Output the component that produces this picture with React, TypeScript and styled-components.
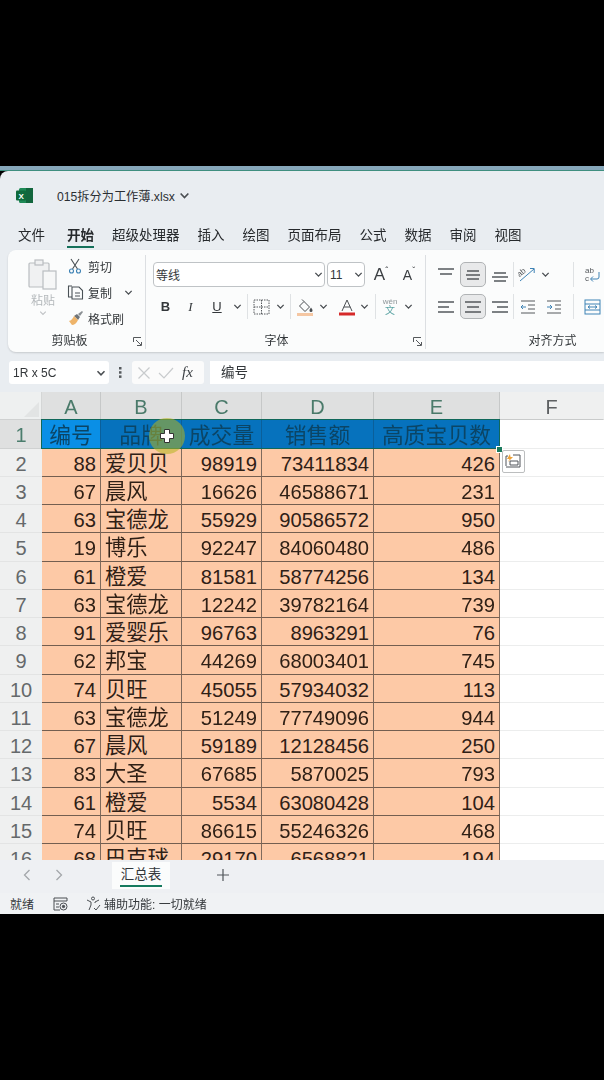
import React from "react";
import styled, { createGlobalStyle } from "styled-components";

const Global = createGlobalStyle`
  html, body { margin: 0; padding: 0; background: #000; }
  body { font-family: "Liberation Sans", "Noto Sans CJK SC", sans-serif; }
`;

const Page = styled.div`
  width: 604px; height: 1080px; background: #000; overflow: hidden;
  display: flex; flex-direction: column;
`;
const BlackBand = styled.div<{ $h: number }>`height: ${(p) => p.$h}px; flex: none; background: #000;`;
const DesktopStrip = styled.div`
  height: 4px; flex: none; background: #86a7ba; border-bottom: 1px solid #3f8f80; box-sizing: content-box;
`;
const Window = styled.div`
  height: 743px; flex: none; background: #e9edf1; display: flex; flex-direction: column;
  border-top-left-radius: 8px; overflow: hidden; filter: blur(0.35px);
`;
const TitleBar = styled.div`
  height: 51px; flex: none; display: flex; align-items: center; padding: 0 0 2px 16px; box-sizing: border-box;
  color: #2b2f33; font-size: 12.2px;
`;
const TitleText = styled.span`margin-left: 24px; margin-right: 4px;`;
const TabRow = styled.div`
  height: 28px; flex: none; display: flex; align-items: flex-start; padding: 5px 0 0 18px; box-sizing: border-box; gap: 18px;
`;
const Tab = styled.div<{ $active?: boolean }>`
  font-size: 13.5px; line-height: 17px; height: 21px; color: #26292c; white-space: nowrap; box-sizing: border-box;
  font-weight: ${(p) => (p.$active ? 700 : 400)};
  margin-left: ${(p) => (p.$active ? 4 : 0)}px;
  border-bottom: ${(p) => (p.$active ? "2px solid #14705a" : "none")};
`;
const Ribbon = styled.div`
  height: 102px; flex: none; margin-left: 8px; background: #fbfcfc; border-radius: 8px 0 0 8px;
  display: flex; box-shadow: 0 1px 2px rgba(0,0,0,.15); overflow: hidden;
`;
const Group = styled.div<{ $w: number }>`
  width: ${(p) => p.$w}px; flex: none; position: relative; display: flex; flex-direction: column;
  border-right: 1px solid #dcdfe2; box-sizing: border-box; margin: 5px 0 3px;
`;
const GroupBody = styled.div`flex: 1; min-height: 0; display: flex; flex-direction: column; gap: 7px; padding-top: 7px;`;
const GroupLabel = styled.div<{ $pr: number }>`
  height: 18px; flex: none; text-align: center; font-size: 12px; line-height: 20px; color: #33373a; padding-right: ${(p) => p.$pr}px;
`;
const Launcher = styled.span`position: absolute; right: 3px; bottom: 3px; display: flex;`;
const ClipBody = styled.div`flex: 1; display: flex; padding: 1px 0 0 18px;`;
const PasteCol = styled.div`
  width: 34px; padding-top: 3px; display: flex; flex-direction: column; align-items: center; color: #b4b8bb; font-size: 12px;
`;
const PasteLabel = styled.span`margin-top: 2px; line-height: 16px;`;
const ClipList = styled.div`margin-left: 5px; display: flex; flex-direction: column; gap: 6px;`;
const ClipItem = styled.div`
  display: flex; align-items: center; gap: 3px; height: 20px; font-size: 12px; color: #33373a; white-space: nowrap;
`;
const IconSlot = styled.span<{ $w?: number; $ml?: number }>`
  width: ${(p) => p.$w ?? 20}px; margin-left: ${(p) => p.$ml ?? 0}px; flex: none; display: flex; align-items: center; justify-content: center;
`;
const Row = styled.div`display: flex; align-items: center; height: 25px; padding-left: 7px;`;
const SelectBox = styled.div<{ $w: number }>`
  width: ${(p) => p.$w}px; height: 25px; flex: none; box-sizing: border-box; background: #fff; border: 1px solid #bfc3c6; border-radius: 4px;
  display: flex; align-items: center; justify-content: space-between; padding: 0 1px 0 2px; font-size: 12px; color: #33373a; margin-right: 2px;
`;
const Btn = styled.span<{ $w: number; $on?: boolean; $ml?: number }>`
  width: ${(p) => p.$w}px; height: 25px; flex: none; box-sizing: border-box; display: flex; align-items: center; justify-content: center;
  margin-left: ${(p) => p.$ml ?? 0}px; border-radius: 5px; font-size: 13px; color: #33373a;
  background: ${(p) => (p.$on ? "#e8e9ea" : "transparent")};
  border: 1px solid ${(p) => (p.$on ? "#b0b3b5" : "transparent")};
`;
const Bold = styled.b`font-size: 13px;`;
const Italic = styled.i`font-size: 13px; font-family: "Liberation Serif", serif;`;
const Under = styled.u`font-size: 13px;`;
const Sep = styled.span`width: 1px; height: 25px; flex: none; background: #dfe2e4;`;
const BigA = styled.span<{ $s: number }>`font-size: ${(p) => p.$s}px; color: #3a3e42; display: flex; align-items: flex-start; line-height: 18px;`;
const Caret = styled.span`font-size: 9px; line-height: 9px;`;
const Wen = styled.span`display: flex; flex-direction: column; align-items: center; font-size: 8px; line-height: 8px; color: #8d9598;`;
const WenCjk = styled.span`font-size: 10px; line-height: 9px; color: #5aa3a3;`;

const FormulaRow = styled.div`
  height: 23px; flex: none; margin-top: 9px; display: flex; align-items: stretch;
`;
const NameBox = styled.div`
  width: 100px; margin-left: 9px; background: #fff; border-radius: 3px; display: flex; align-items: center; justify-content: space-between;
  box-sizing: border-box; padding: 0 3px 0 4px; font-size: 12px; color: #33373a;
`;
const Dots = styled.div`width: 23px; flex: none; display: flex; align-items: center; justify-content: center;`;
const FxBox = styled.div`
  width: 72px; background: #fbfbfb; border-radius: 3px; display: flex; align-items: center; gap: 7px; box-sizing: border-box; padding-left: 5px;
`;
const FxLabel = styled.i`font-family: "Liberation Serif", serif; font-size: 15px; color: #3a3e42; margin-left: 1px;`;
const FormulaInput = styled.div`
  flex: 1; margin-left: 6px; background: #fff; font-size: 13.5px; color: #33373a; display: flex; align-items: center; padding: 0 0 3px 11px;
`;

const Sheet = styled.div`
  height: 468px; flex: none; margin-top: 8px; position: relative; overflow: hidden; background: #fff;
  display: grid; grid-template-columns: 42px 59px 81px 80px 112px 126px 1fr; grid-auto-rows: 28.25px; align-content: start;
`;
const Corner = styled.div`
  height: 28px; background: #eef0f0; border-right: 1px solid #d4d6d6; border-bottom: 1px solid #cfd1d1; box-sizing: border-box; position: relative;
  &::after { content: ""; position: absolute; right: 2px; bottom: 2px; border-style: solid; border-width: 0 0 15px 15px; border-color: transparent transparent #e2e4e4 transparent; }
`;
const ColHead = styled.div<{ $sel?: boolean }>`
  height: 28px; box-sizing: border-box; text-align: center; font-size: 20px; line-height: 30px;
  background: ${(p) => (p.$sel ? "#dfe0e0" : "#eff0f0")};
  color: ${(p) => (p.$sel ? "#4a7a6a" : "#5d6062")};
  border-right: 1px solid ${(p) => (p.$sel ? "#c6c8c8" : "#eff0f0")};
  border-bottom: 1px solid ${(p) => (p.$sel ? "#2f7d68" : "#c9cbcb")};
`;
const RowHead = styled.div<{ $sel?: boolean }>`
  box-sizing: border-box; text-align: center; font-size: 20px; line-height: 30px; color: ${(p) => (p.$sel ? "#4b7d6d" : "#65696b")};
  background: ${(p) => (p.$sel ? "#dfe0e0" : "#eff0f0")}; border-bottom: 1px solid ${(p) => (p.$sel ? "#cfd1d1" : "#e3e4e4")};
`;
const Cell = styled.div<{ $name?: boolean }>`
  box-sizing: border-box; background: #fdc9a6; color: #2f2016; line-height: 30px; white-space: nowrap; overflow: hidden;
  border-right: 1px solid #7f6a5c; border-bottom: 1px solid #735e50;
  font-size: ${(p) => (p.$name ? 21.2 : 20.2)}px;
  text-align: ${(p) => (p.$name ? "left" : "right")};
  padding: ${(p) => (p.$name ? "0 0 0 4px" : "0 4px 0 0")};
`;
const HeadCell = styled.div<{ $active?: boolean }>`
  box-sizing: border-box; background: ${(p) => (p.$active ? "#0a8fe6" : "#0672bd")}; color: #0b4566; font-size: 21.8px; line-height: 31px;
  text-align: center; white-space: nowrap; overflow: hidden; border-right: 1px solid #0a5f9a;
`;
const Blank = styled.div`border-bottom: 1px solid #eceded; box-sizing: border-box;`;
const Selection = styled.div`
  position: absolute; left: 41px; top: 27px; width: 459px; height: 30px; box-sizing: border-box; border: 1.5px solid #10685a; pointer-events: none;
`;
const Handle = styled.div`position: absolute; left: 496px; top: 54px; width: 5px; height: 5px; background: #1a7a5c; border: 1px solid #fff;`;
const Glow = styled.div`
  position: absolute; left: 149px; top: 26px; width: 36px; height: 36px; border-radius: 50%; background: rgba(180, 180, 30, .55);
`;
const CursorWrap = styled.div`position: absolute; left: 159px; top: 36px; display: flex;`;
const PasteOpt = styled.div`
  position: absolute; left: 502px; top: 58px; width: 23px; height: 23px; background: #fff; border: 1px solid #bcbebf; box-sizing: border-box; border-radius: 2px;
  display: flex; align-items: center; justify-content: center;
`;

const SheetBar = styled.div`
  height: 33px; flex: none; background: #eef0f3; display: flex; align-items: flex-start; padding-top: 2px; box-sizing: border-box;
`;
const NavBtn = styled.span<{ $w: number }>`width: ${(p) => p.$w}px; height: 26px; flex: none; display: flex; align-items: center; justify-content: center;`;
const SheetTab = styled.div`
  width: 58px; height: 27px; background: #fbfcfc; flex: none; margin-left: 27px; position: relative; box-sizing: border-box;
  text-align: center; font-size: 13.5px; line-height: 25px; color: #33373a;
  &::after { content: ""; position: absolute; left: 8px; right: 8px; bottom: 2px; height: 2px; background: #167a5e; }
`;
const StatusBar = styled.div`
  height: 21px; flex: none; background: #f0f2f4; display: flex; align-items: center; padding-left: 10px; font-size: 12px; color: #33373a; box-sizing: border-box;
`;
const StatusGap = styled.span<{ $w: number }>`width: ${(p) => p.$w}px; flex: none; display: flex; align-items: center;`;

const Chev = ({ s = 9, c = "#4a4e52" }: { s?: number; c?: string }) => (
  <svg width={s} height={s} viewBox="0 0 10 10" fill="none" stroke={c} strokeWidth="1.5"><path d="M1.5 3.2 5 6.8 8.5 3.2" /></svg>
);
const Lines = ({ d, c = "#54585c" }: { d: string; c?: string }) => (
  <svg width="18" height="16" viewBox="0 0 18 16" fill="none" stroke={c} strokeWidth="1.3"><path d={d} /></svg>
);
const LaunchIcon = () => (
  <svg width="9" height="9" viewBox="0 0 9 9" fill="none" stroke="#55595c"><path d="M.5 5V.5H8M8.5 8.5H4M3 3l5 5M8.5 5v3.5" /></svg>
);

const tabs = ["文件", "开始", "超级处理器", "插入", "绘图", "页面布局", "公式", "数据", "审阅", "视图"];
const cols = ["A", "B", "C", "D", "E"];
const header = ["编号", "品牌", "成交量", "销售额", "高质宝贝数"];
const rows: [number, string, number, number, number][] = [
  [88, "爱贝贝", 98919, 73411834, 426],
  [67, "晨风", 16626, 46588671, 231],
  [63, "宝德龙", 55929, 90586572, 950],
  [19, "博乐", 92247, 84060480, 486],
  [61, "橙爱", 81581, 58774256, 134],
  [63, "宝德龙", 12242, 39782164, 739],
  [91, "爱婴乐", 96763, 8963291, 76],
  [62, "邦宝", 44269, 68003401, 745],
  [74, "贝旺", 45055, 57934032, 113],
  [63, "宝德龙", 51249, 77749096, 944],
  [67, "晨风", 59189, 12128456, 250],
  [83, "大圣", 67685, 5870025, 793],
  [61, "橙爱", 5534, 63080428, 104],
  [74, "贝旺", 86615, 55246326, 468],
  [68, "巴克球", 29170, 6568821, 194],
];

export default function App() {
  return (
    <Page>
      <Global />
      <BlackBand $h={166} />
      <DesktopStrip />
      <Window>
        <TitleBar>
          <svg width="17" height="17" viewBox="0 0 17 17">
            <rect x="3" y="1" width="14" height="15" rx="1.5" fill="#1f8a57" />
            <rect x="10" y="1" width="7" height="15" fill="#12663d" />
            <rect x="0" y="3.5" width="10" height="10" rx="1" fill="#0f6b3d" />
            <text x="2.6" y="11.5" fontSize="8" fontWeight="700" fill="#fff" fontFamily="Liberation Sans">X</text>
          </svg>
          <TitleText>015拆分为工作薄.xlsx</TitleText>
          <Chev s={11} />
        </TitleBar>
        <TabRow>
          {tabs.map((t) => <Tab key={t} $active={t === "开始"}>{t}</Tab>)}
        </TabRow>
        <Ribbon>
          <Group $w={138}>
            <ClipBody>
              <PasteCol>
                <svg width="30" height="32" viewBox="0 0 30 32" fill="none" stroke="#b9bdc0" strokeWidth="1.2">
                  <rect x="1" y="4" width="20" height="24" rx="1" fill="#f0f1f2" />
                  <rect x="7" y="1" width="8" height="5" fill="#f0f1f2" />
                  <rect x="15" y="12" width="13" height="18" fill="#f6f7f7" />
                </svg>
                <PasteLabel>粘贴</PasteLabel>
                <Chev s={8} c="#c0c3c6" />
              </PasteCol>
              <ClipList>
                <ClipItem>
                  <IconSlot>
                    <svg width="14" height="16" viewBox="0 0 14 16" fill="none" stroke="#4a5156" strokeWidth="1.1">
                      <path d="M3 1l6.5 10M11 1 4.5 11" /><circle cx="3.5" cy="13" r="2" stroke="#3f83b5" /><circle cx="10.5" cy="13" r="2" stroke="#3f83b5" />
                    </svg>
                  </IconSlot>剪切
                </ClipItem>
                <ClipItem>
                  <IconSlot>
                    <svg width="17" height="16" viewBox="0 0 17 16" fill="none" stroke="#4a5156" strokeWidth="1.1">
                      <path d="M5 13H1.5V2H5" /><path d="M5 3h7l3.5 3.5V15H5zM8 9h5M8 12h5" />
                    </svg>
                  </IconSlot>复制<IconSlot $w={9} $ml={9}><Chev /></IconSlot>
                </ClipItem>
                <ClipItem>
                  <IconSlot>
                    <svg width="17" height="16" viewBox="0 0 17 16">
                      <path d="M7 6l3-2 3 3-2 3z" fill="#6f7478" /><path d="M11 4l4-3 1 1-3 4z" fill="#8a8f93" />
                      <path d="M2 11c2 0 4-3 5-5l4 4c-1 3-4 5-6 5z" fill="#eeb46a" />
                    </svg>
                  </IconSlot>格式刷
                </ClipItem>
              </ClipList>
            </ClipBody>
            <GroupLabel $pr={14}>剪贴板</GroupLabel>
            <Launcher><LaunchIcon /></Launcher>
          </Group>
          <Group $w={280}>
            <GroupBody>
              <Row>
                <SelectBox $w={172}>等线<Chev /></SelectBox>
                <SelectBox $w={38}>11<Chev /></SelectBox>
                <Btn $w={22} $ml={3}><BigA $s={17}>A<Caret>ˆ</Caret></BigA></Btn>
                <Btn $w={22} $ml={6}><BigA $s={14}>A<Caret>ˇ</Caret></BigA></Btn>
              </Row>
              <Row>
                <Btn $w={25}><Bold>B</Bold></Btn>
                <Btn $w={25}><Italic>I</Italic></Btn>
                <Btn $w={28}><Under>U</Under></Btn>
                <IconSlot $w={13}><Chev /></IconSlot>
                <IconSlot $w={3} />
                <Sep />
                <IconSlot $w={26}>
                  <svg width="17" height="16" viewBox="0 0 17 16" fill="none" stroke="#54585c" strokeDasharray="1.5 1"><path d="M1 1h15v14H1zM8.5 1v14M1 8h15" /></svg>
                </IconSlot>
                <IconSlot $w={9} $ml={2}><Chev /></IconSlot>
                <IconSlot $w={5} />
                <Sep />
                <IconSlot $w={28}>
                  <svg width="18" height="18" viewBox="0 0 18 18" fill="none">
                    <path d="M3.5 8 8 3.5l5.5 5.5L9 13.5zM8 3.5 6 1.5" stroke="#4a4e52" /><path d="M15 9.5c1 1.5 1.5 2 1.5 3a1.5 1.5 0 0 1-3 0c0-1 .5-1.5 1.500-3z" fill="#4a4e52" /><rect x="1" y="15" width="16" height="3" fill="#f5c7a3" />
                  </svg>
                </IconSlot>
                <IconSlot $w={9}><Chev /></IconSlot>
                <Btn $w={25} $ml={6}>
                  <svg width="18" height="18" viewBox="0 0 18 18" fill="none">
                    <path d="M4 13 9 2l5 11M5.800 9h6.400" stroke="#4a4e52" /><rect x="1" y="14.500" width="16" height="3" fill="#d62a2a" />
                  </svg>
                </Btn>
                <IconSlot $w={9} $ml={1}><Chev /></IconSlot>
                <IconSlot $w={6} />
                <Sep />
                <IconSlot $w={28}><Wen>wén<WenCjk>文</WenCjk></Wen></IconSlot>
                <IconSlot $w={9}><Chev /></IconSlot>
              </Row>
            </GroupBody>
            <GroupLabel $pr={18}>字体</GroupLabel>
            <Launcher><LaunchIcon /></Launcher>
          </Group>
          <Group $w={260}>
            <GroupBody>
              <Row>
                <Btn $w={26}><Lines d="M1 2h16M3 7h12" /></Btn>
                <Btn $w={26} $ml={1} $on><Lines d="M3 4h12M2 8h14M3 12h12" /></Btn>
                <Btn $w={27}><Lines d="M3 6h12M1 10h16M3 14h12" /></Btn>
                <Sep />
                <IconSlot $w={26}>
                  <svg width="18" height="17" viewBox="0 0 18 17" fill="none" stroke="#54585c">
                    <path d="M2 15 16 3M12 2.500h4.200V7" stroke="#3f83b5" /><text x="0" y="9" fontSize="8" fill="#54585c" stroke="none" fontFamily="Liberation Sans" transform="rotate(-40 4 8)">ab</text>
                  </svg>
                </IconSlot>
                <IconSlot $w={9} $ml={1}><Chev /></IconSlot>
                <IconSlot $w={23} />
                <Sep />
                <IconSlot $w={36}>
                  <svg width="17" height="17" viewBox="0 0 17 17" fill="none">
                    <text x="1" y="7" fontSize="8" fill="#54585c" fontFamily="Liberation Sans">ab</text>
                    <text x="1" y="15" fontSize="8" fill="#54585c" fontFamily="Liberation Sans">c</text>
                    <path d="M15 6v5a2 2 0 0 1-2 2H7M9 10.500 6.500 13 9 15.500" stroke="#3f83b5" />
                  </svg>
                </IconSlot>
              </Row>
              <Row>
                <Btn $w={26}><Lines d="M1 3h16M1 8h11M1 13h16" /></Btn>
                <Btn $w={26} $ml={1} $on><Lines d="M1 3h16M3 8h12M1 13h16" /></Btn>
                <Btn $w={27}><Lines d="M1 3h16M6 8h11M1 13h16" /></Btn>
                <Sep />
                <IconSlot $w={27}>
                  <svg width="16" height="14" viewBox="0 0 16 14" fill="none" stroke="#54585c"><path d="M1 1h14M8 5h7M8 9h7M1 13h14" /><path d="M6 7H1M3 5 1 7l2 2" stroke="#3f83b5" /></svg>
                </IconSlot>
                <IconSlot $w={26}>
                  <svg width="16" height="14" viewBox="0 0 16 14" fill="none" stroke="#54585c"><path d="M1 1h14M9 5h6M9 9h6M1 13h14" /><path d="M1 7h5M4 5l2 2-2 2" stroke="#3f83b5" /></svg>
                </IconSlot>
                <IconSlot $w={6} />
                <Sep />
                <IconSlot $w={36}>
                  <svg width="17" height="16" viewBox="0 0 17 16" fill="none" stroke="#3f83b5"><rect x="1" y="1" width="15" height="14" /><path d="M1 5h15M1 11h15M4 8h9M6 6.500 4 8l2 1.500M11 6.500 13 8l-2 1.500" /></svg>
                </IconSlot>
              </Row>
            </GroupBody>
            <GroupLabel $pr={6}>对齐方式</GroupLabel>
          </Group>
        </Ribbon>
        <FormulaRow>
          <NameBox>1R x 5C<Chev s={10} /></NameBox>
          <Dots>
            <svg width="3" height="11" viewBox="0 0 3 11" fill="#55595c"><rect width="2.5" height="2.5" /><rect y="4.200" width="2.5" height="2.5" /><rect y="8.400" width="2.5" height="2.5" /></svg>
          </Dots>
          <FxBox>
            <svg width="14" height="14" viewBox="0 0 14 14" fill="none" stroke="#c8cbcd" strokeWidth="1.2"><path d="M1.500 1.500l11 11M12.500 1.500l-11 11" /></svg>
            <svg width="16" height="14" viewBox="0 0 16 14" fill="none" stroke="#c8cbcd" strokeWidth="1.2"><path d="M1 7l5 5L15 2" /></svg>
            <FxLabel>fx</FxLabel>
          </FxBox>
          <FormulaInput>编号</FormulaInput>
        </FormulaRow>
        <Sheet>
          <Corner />
          {cols.map((c) => <ColHead key={c} $sel>{c}</ColHead>)}
          <ColHead>F</ColHead>

          <RowHead $sel>1</RowHead>
          {header.map((h, i) => <HeadCell key={h} $active={i === 0}>{h}</HeadCell>)}
          <Blank />

          {rows.map((r, i) => (
            <React.Fragment key={i}>
              <RowHead>{i + 2}</RowHead>
              <Cell>{r[0]}</Cell>
              <Cell $name>{r[1]}</Cell>
              <Cell>{r[2]}</Cell>
              <Cell>{r[3]}</Cell>
              <Cell>{r[4]}</Cell>
              <Blank />
            </React.Fragment>
          ))}
          <Selection />
          <Handle />
          <Glow />
          <CursorWrap>
            <svg width="16" height="16" viewBox="0 0 16 16">
              <path d="M5.500 1.500h5v4h4v5h-4v4h-5v-4h-4v-5h4z" fill="#fff" stroke="#333" strokeWidth="1" />
            </svg>
          </CursorWrap>
          <PasteOpt>
            <svg width="17" height="17" viewBox="0 0 17 17" fill="none" stroke="#50555a">
              <path d="M1 13V3h2M8 2h7v12H1" /><path d="M5 8h8v4H5z" />
              <path d="M5 1 2 6h2.500L3 9l5-5H5.500z" fill="#eda23a" stroke="none" />
            </svg>
          </PasteOpt>
        </Sheet>
        <SheetBar>
          <NavBtn $w={54}>
            <svg width="8" height="12" viewBox="0 0 8 12" fill="none" stroke="#a3a7aa" strokeWidth="1.3"><path d="M6.500 1 1.500 6l5 5" /></svg>
          </NavBtn>
          <NavBtn $w={10}>
            <svg width="8" height="12" viewBox="0 0 8 12" fill="none" stroke="#a3a7aa" strokeWidth="1.3"><path d="M1.500 1l5 5-5 5" /></svg>
          </NavBtn>
          <NavBtn $w={21} />
          <SheetTab>汇总表</SheetTab>
          <NavBtn $w={106}>
            <svg width="12" height="12" viewBox="0 0 12 12" stroke="#50555a" strokeWidth="1.2"><path d="M6 0v12M0 6h12" /></svg>
          </NavBtn>
        </SheetBar>
        <StatusBar>
          就绪
          <StatusGap $w={19} />
          <svg width="15" height="14" viewBox="0 0 15 14" fill="none" stroke="#4a4e52"><path d="M1 1h13v3H1zM1 4v9h6M3 7h3M3 10h3" /><circle cx="10.500" cy="9.500" r="3.500" /><circle cx="10.500" cy="9.500" r="1.200" fill="#4a4e52" /></svg>
          <StatusGap $w={18} />
          <svg width="15" height="15" viewBox="0 0 15 15" fill="none" stroke="#4a4e52"><circle cx="7" cy="2.500" r="1.500" /><path d="M1 4l4 2v3l-2 5M13 4l-4 2v1M8 12l2 2 4-5" /></svg>
          <StatusGap $w={3} />
          辅助功能: 一切就绪
        </StatusBar>
      </Window>
      <BlackBand $h={166} />
    </Page>
  );
}
